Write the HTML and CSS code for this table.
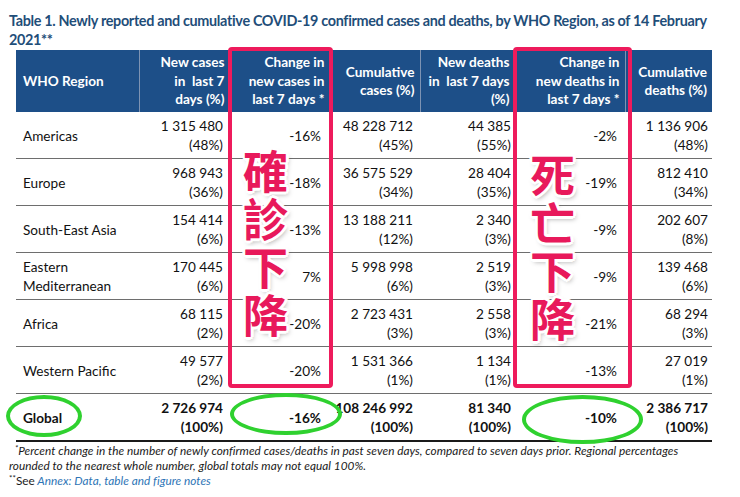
FILE: index.html
```html
<!DOCTYPE html>
<html lang="en">
<head>
<meta charset="utf-8">
<title>Table 1</title>
<link rel="stylesheet" href="styles.css">
</head>
<body>
<div class="page">
  <h1 class="title">Table 1. Newly reported and cumulative COVID-19 confirmed cases and deaths, by WHO Region, as of 14 February 2021**</h1>
  <div class="table-wrap">
    <table class="who">
      <colgroup>
        <col class="c1"><col class="c2"><col class="c3"><col class="c4"><col class="c5"><col class="c6"><col class="c7">
      </colgroup>
      <thead>
        <tr>
          <th class="left">WHO Region</th>
          <th>New cases<br>in&nbsp; last 7<br>days (%)</th>
          <th>Change in<br>new cases in<br>last 7 days *</th>
          <th>Cumulative<br>cases (%)</th>
          <th>New deaths<br>in&nbsp; last 7 days<br>(%)</th>
          <th>Change in<br>new deaths in<br>last 7 days *</th>
          <th>Cumulative<br>deaths (%)</th>
        </tr>
      </thead>
      <tbody>
        <tr><td class="left">Americas</td><td>1 315 480<br>(48%)</td><td class="chg">-16%</td><td>48 228 712<br>(45%)</td><td class="nd">44 385<br>(55%)</td><td class="chg">-2%</td><td class="last">1 136 906<br>(48%)</td></tr>
        <tr><td class="left">Europe</td><td>968 943<br>(36%)</td><td class="chg">-18%</td><td>36 575 529<br>(34%)</td><td class="nd">28 404<br>(35%)</td><td class="chg">-19%</td><td class="last">812 410<br>(34%)</td></tr>
        <tr><td class="left">South-East Asia</td><td>154 414<br>(6%)</td><td class="chg">-13%</td><td>13 188 211<br>(12%)</td><td class="nd">2 340<br>(3%)</td><td class="chg">-9%</td><td class="last">202 607<br>(8%)</td></tr>
        <tr><td class="left">Eastern<br>Mediterranean</td><td>170 445<br>(6%)</td><td class="chg">7%</td><td>5 998 998<br>(6%)</td><td class="nd">2 519<br>(3%)</td><td class="chg">-9%</td><td class="last">139 468<br>(6%)</td></tr>
        <tr><td class="left">Africa</td><td>68 115<br>(2%)</td><td class="chg">-20%</td><td>2 723 431<br>(3%)</td><td class="nd">2 558<br>(3%)</td><td class="chg">-21%</td><td class="last">68 294<br>(3%)</td></tr>
        <tr><td class="left">Western Pacific</td><td>49 577<br>(2%)</td><td class="chg">-20%</td><td>1 531 366<br>(1%)</td><td class="nd">1 134<br>(1%)</td><td class="chg">-13%</td><td class="last">27 019<br>(1%)</td></tr>
        <tr class="global"><td class="left">Global</td><td>2 726 974<br>(100%)</td><td class="chg">-16%</td><td>108 246 992<br>(100%)</td><td class="nd">81 340<br>(100%)</td><td class="chg">-10%</td><td class="last">2 386 717<br>(100%)</td></tr>
      </tbody>
    </table>

    <div class="mark box-cases">
      <div class="zh zh-cases"><span>確</span><span>診</span><span>下</span><span>降</span></div>
    </div>
    <div class="mark box-deaths">
      <div class="zh zh-deaths"><span>死</span><span>亡</span><span>下</span><span>降</span></div>
    </div>
    <div class="ring ring-global"></div>
    <div class="ring ring-cases"></div>
    <div class="ring ring-deaths"></div>
  </div>
  <p class="note"><sup>*</sup>Percent change in the number of newly confirmed cases/deaths in past seven days, compared to seven days prior. Regional percentages rounded to the nearest whole number, global totals may not equal 100%.<br><span class="upright"><sup>**</sup>See</span> <a class="annex" href="#">Annex: Data, table and figure notes</a></p>
</div>
</body>
</html>
```
FILE: styles.css
```css
html, body {
  margin: 0;
  padding: 0;
  background: #ffffff;
}

.page {
  width: 740px;
  height: 497px;
  padding: 11px 0 0 9px;
  box-sizing: border-box;
  font-family: "Lato", "Noto Sans", sans-serif;
  color: #1a1a1a;
  overflow: hidden;
}

.title {
  margin: 0;
  width: 712px;
  font-size: 14.4px;
  line-height: 19px;
  font-weight: 700;
  letter-spacing: -0.33px;
  color: #1f4e79;
}

.table-wrap {
  position: relative;
  margin: 1px 0 0 7px;
  width: 696px;
}

.who {
  border-collapse: collapse;
  table-layout: fixed;
  width: 696px;
  font-size: 13.6px;
  color: #111;
}

.c1 { width: 123px; }
.c2 { width: 91px; }
.c3 { width: 100px; }
.c4 { width: 90px; }
.c5 { width: 95px; }
.c6 { width: 110px; }
.c7 { width: 87px; }

.who th {
  background: #1d4f88;
  color: #ffffff;
  font-weight: 700;
  text-align: right;
  vertical-align: middle;
  line-height: 18.5px;
  padding: 3px 5px 3px 4px;
  height: 56px;
  border-left: 1px solid #7d93b3;
  white-space: nowrap;
}

.who th:first-child { border-left: none; }

.who th.left {
  text-align: left;
  padding-left: 7px;
}

.who td {
  text-align: right;
  vertical-align: middle;
  line-height: 19px;
  padding: 5px 7px 3px 4px;
  height: 38px;
  border-bottom: 1px solid #6e6e6e;
  white-space: nowrap;
}

.who td.left {
  text-align: left;
  padding-left: 7px;
}

.who td.chg { padding-right: 9px; }
.who td.nd { padding-right: 4px; }
.who td.last { padding-right: 4px; }
.who td.chg:nth-child(6) { padding-right: 8px; }

.who tr.global td {
  font-weight: 700;
  border-bottom: 2px solid #1a1a1a;
}

.mark {
  position: absolute;
  top: -3px;
  height: 333px;
  border: 4px solid #ee1b5c;
  border-radius: 4px;
}

.box-cases { left: 212px; width: 97px; }
.box-deaths { left: 497px; width: 111px; }

.zh {
  position: absolute;
  top: 95px;
  display: flex;
  flex-direction: column;
  align-items: center;
  font-family: "Noto Sans CJK TC", "Noto Sans CJK SC", sans-serif;
  font-weight: 700;
  font-size: 45px;
  line-height: 48px;
  color: #e8195b;
  text-shadow:
    -3px 0 #fff, 3px 0 #fff, 0 -3px #fff, 0 3px #fff,
    -2px -2px #fff, 2px -2px #fff, -2px 2px #fff, 2px 2px #fff,
    2px 3px 5px rgba(0, 0, 0, 0.35);
}

.zh-cases { left: 11px; }
.zh-deaths { left: 13px; top: 99px; }

.ring {
  position: absolute;
  border: 4px solid #2fd12f;
  border-radius: 50%;
  box-sizing: border-box;
}

.ring-global { left: -10px; top: 345px; width: 76px; height: 42px; }
.ring-cases { left: 214px; top: 343px; width: 112px; height: 42px; }
.ring-deaths { left: 506px; top: 345px; width: 121px; height: 49px; }

.note {
  margin: 1px 0 0 0;
  width: 690px;
  font-size: 11.8px;
  line-height: 15px;
  letter-spacing: 0.03px;
  font-style: italic;
  color: #1a1a1a;
  text-indent: 6px;
}

.note sup {
  font-size: 8px;
  line-height: 0;
  vertical-align: 4px;
}

.upright { font-style: normal; }

.annex {
  color: #2e75b6;
  text-decoration: none;
}
```
